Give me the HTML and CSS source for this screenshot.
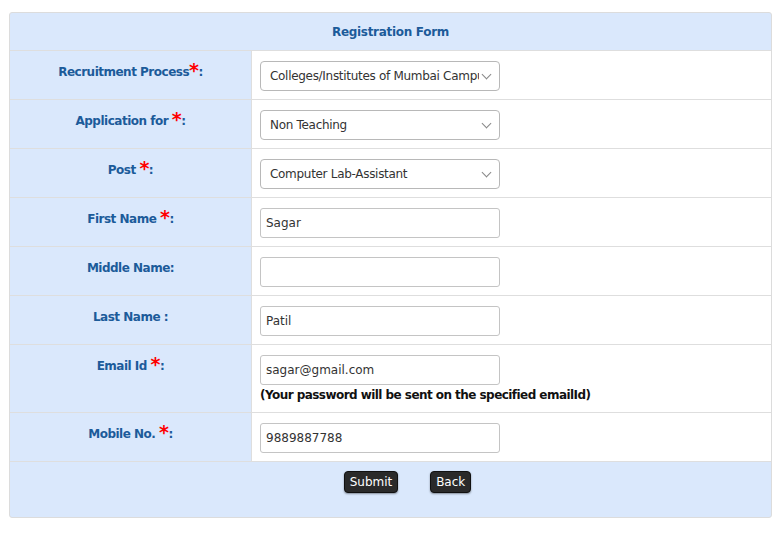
FILE: index.html
```html
<!DOCTYPE html>
<html lang="en">
<head>
    <meta charset="UTF-8">
    <meta name="viewport" content="width=device-width, initial-scale=1.0">
    <title>Registration Form</title>
    <link rel="stylesheet" href="styles.css">
</head>
<body>
    <div class="panel">
        <table class="form-table">
            <tr>
                <th colspan="2" class="title">Registration Form</th>
            </tr>
            <tr>
                <td class="label">Recruitment Process<span class="req">*</span>:</td>
                <td class="field">
                    <div class="select"><span>Colleges/Institutes of Mumbai Campus</span><i class="caret"></i></div>
                </td>
            </tr>
            <tr>
                <td class="label">Application for <span class="req">*</span>:</td>
                <td class="field">
                    <div class="select"><span>Non Teaching</span><i class="caret"></i></div>
                </td>
            </tr>
            <tr>
                <td class="label">Post <span class="req">*</span>:</td>
                <td class="field">
                    <div class="select"><span>Computer Lab-Assistant</span><i class="caret"></i></div>
                </td>
            </tr>
            <tr>
                <td class="label">First Name <span class="req">*</span>:</td>
                <td class="field"><input class="text" type="text" value="Sagar"></td>
            </tr>
            <tr>
                <td class="label">Middle Name:</td>
                <td class="field"><input class="text" type="text" value=""></td>
            </tr>
            <tr>
                <td class="label">Last Name :</td>
                <td class="field"><input class="text" type="text" value="Patil"></td>
            </tr>
            <tr>
                <td class="label">Email Id <span class="req">*</span>:</td>
                <td class="field">
                    <input class="text" type="text" value="sagar@gmail.com">
                    <div class="note">(Your password will be sent on the specified emailId)</div>
                </td>
            </tr>
            <tr>
                <td class="label">Mobile No. <span class="req">*</span>:</td>
                <td class="field"><input class="text" type="text" value="9889887788"></td>
            </tr>
            <tr>
                <td colspan="2" class="actions">
                    <button class="btn">Submit</button>
                    <button class="btn">Back</button>
                </td>
            </tr>
        </table>
    </div>
</body>
</html>
```

FILE: styles.css
```css
body {
    margin: 0;
    padding: 12px 7px 0 9px;
    font-family: "DejaVu Sans", Tahoma, sans-serif;
    font-size: 12px;
    background: #fff;
}
.panel {
    border: 1px solid #dcdcdc;
    border-radius: 3px;
    background: #dae8fc;
    overflow: hidden;
}
.form-table {
    width: 100%;
    border-collapse: collapse;
}
.form-table td, .form-table th {
    border-top: 1px solid #dedede;
    padding: 0;
}
.form-table tr:first-child th {
    border-top: none;
}
.title {
    height: 37px;
    color: #1c5b9a;
    font-weight: bold;
    font-size: 12px;
    text-align: center;
    vertical-align: middle;
    letter-spacing: -0.3px;
}
.label {
    width: 241px;
    border-right: 1px solid #dedede;
    color: #1c5b9a;
    font-weight: bold;
    text-align: center;
    vertical-align: top;
    padding-top: 14px !important;
    height: 34px;
    letter-spacing: -0.5px;
}
.req {
    color: #ff0000;
    font-size: 19px;
    line-height: 10px;
    vertical-align: -1px;
}
.field {
    background: #fff;
    vertical-align: top;
    padding: 10px 8px 8px 8px !important;
    height: 30px;
}
.select {
    border: 1px solid #b8b8b8;
    border-radius: 4px;
    display: flex;
    align-items: center;
    padding: 0 4px 0 9px;
    box-sizing: border-box;
    width: 240px;
    height: 30px;
    color: #333;
    font-size: 12px;
    background: #fff;
    letter-spacing: -0.3px;
}
.select span {
    flex: 1;
    white-space: nowrap;
    overflow: hidden;
}
.caret {
    width: 6px;
    height: 6px;
    border-right: 1px solid #888;
    border-bottom: 1px solid #888;
    transform: rotate(45deg);
    margin: -4px 5px 0 4px;
}
.text {
    display: block;
    box-sizing: border-box;
    width: 240px;
    height: 30px;
    border: 1px solid #c4c4c4;
    border-radius: 3px;
    padding: 0 5px;
    font-family: "DejaVu Sans", Tahoma, sans-serif;
    font-size: 12px;
    color: #333;
    margin: 0;
}
.note {
    margin-top: 3px;
    padding-bottom: 2px;
    font-weight: bold;
    color: #111;
    letter-spacing: -0.55px;
}
.actions {
    height: 46px;
    text-align: center;
    vertical-align: top;
    padding: 9px 0 0 34px !important;
}
.btn {
    background: #2a2a2a;
    color: #fff;
    border: 1px solid #111;
    border-radius: 4px;
    font-family: "DejaVu Sans", Tahoma, sans-serif;
    font-size: 12px;
    height: 22px;
    padding: 0 5px;
    margin: 0 14px;
    box-shadow: 0 1px 2px rgba(0, 0, 0, 0.4);
}
```
